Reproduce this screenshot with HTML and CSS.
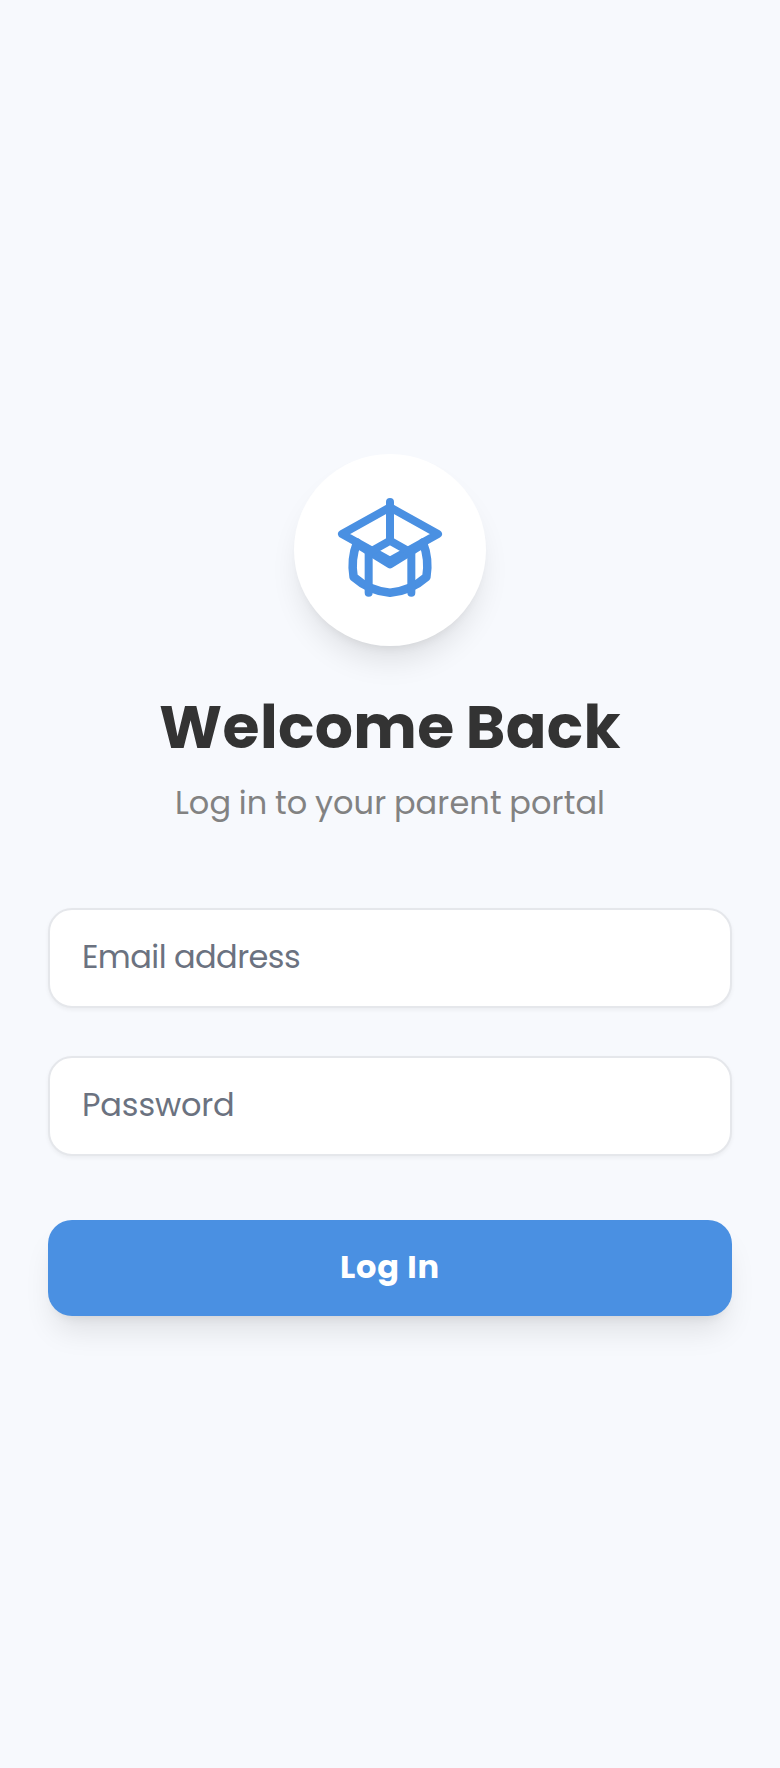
FILE: index.html
```html
<!DOCTYPE html>
<html lang="en">
<head>
<meta charset="utf-8">
<title>Log In</title>
<link rel="stylesheet" href="styles.css">
</head>
<body>
<main class="login">
  <div class="logo">
    <svg class="logo-icon" viewBox="0 0 24 24" fill="none" stroke="currentColor" stroke-width="1.5" stroke-linecap="round" stroke-linejoin="round">
      <path d="M12 14l9-5-9-5-9 5 9 5z"/>
      <path stroke-width="1.6" d="M12 14.65l6.16-3.8M12 14.65l-6.16-3.8M18.16 10.578a12.083 12.083 0 01.665 6.479A11.952 11.952 0 0112 20.02a11.952 11.952 0 01-6.824-2.963 12.078 12.078 0 01.665-6.479"/>
      <path d="M8 20v-7.5l4-2.222 4 2.222V20M12 3v7.278"/>
    </svg>
  </div>
  <h1 class="title">Welcome Back</h1>
  <p class="subtitle">Log in to your parent portal</p>
  <form class="form">
    <input class="field email" type="email" placeholder="Email address">
    <input class="field password" type="password" placeholder="Password">
    <button class="submit" type="button">Log In</button>
  </form>
</main>
</body>
</html>
```
FILE: styles.css
```css
* { box-sizing: border-box; }
body {
  margin: 0;
  height: 1768px;
  overflow: hidden;
  background: #f7f9fd;
  font-family: Poppins, Inter, "Open Sans", sans-serif;
}
/* Mobile layout, drawn at double size */
.login {
  width: 390px;
  height: 884px;
  padding: 1px 24px 0;
  display: flex;
  flex-direction: column;
  align-items: center;
  justify-content: center;
  transform: scale(2);
  transform-origin: 0 0;
}
.logo {
  width: 96px;
  height: 96px;
  display: flex;
  align-items: center;
  justify-content: center;
  border-radius: 50%;
  background: #fff;
  color: #4a90e2;
  box-shadow: 0 10px 15px -3px rgba(0,0,0,.1), 0 4px 6px -4px rgba(0,0,0,.1);
}
.logo-icon { width: 64px; height: 64px; }
.title {
  margin: 23px 0 0;
  font-size: 30px;
  font-weight: 700;
  line-height: 36px;
  letter-spacing: .2px;
  word-spacing: -1px;
  color: #333;
  white-space: nowrap;
}
.subtitle {
  margin: 8px 0 0;
  font-size: 16px;
  line-height: 24px;
  letter-spacing: .05px;
  word-spacing: -.5px;
  color: #828282;
  white-space: nowrap;
}
.form {
  width: 100%;
  margin-top: 40px;
  display: flex;
  flex-direction: column;
}
.field {
  width: 100%;
  height: 50px;
  margin: 0 0 24px;
  padding: 0 16px 1px;
  border: 1px solid #e5e7eb;
  border-radius: 12px;
  background: #fff;
  font: 400 16px Poppins, Inter, sans-serif;
  box-shadow: 0 1px 2px rgba(0,0,0,.05);
}
.field::placeholder { color: #6b7280; opacity: 1; }
.email { letter-spacing: -.28px; }
.password { letter-spacing: -.08px; }
.submit {
  height: 48px;
  margin-top: 8px;
  padding-bottom: 3px;
  border: 0;
  border-radius: 12px;
  background: #4a90e2;
  color: #fff;
  font: 700 16px Poppins, Inter, sans-serif;
  letter-spacing: .4px;
  box-shadow: 0 10px 15px -3px rgba(0,0,0,.1), 0 4px 6px -4px rgba(0,0,0,.1);
}
```
